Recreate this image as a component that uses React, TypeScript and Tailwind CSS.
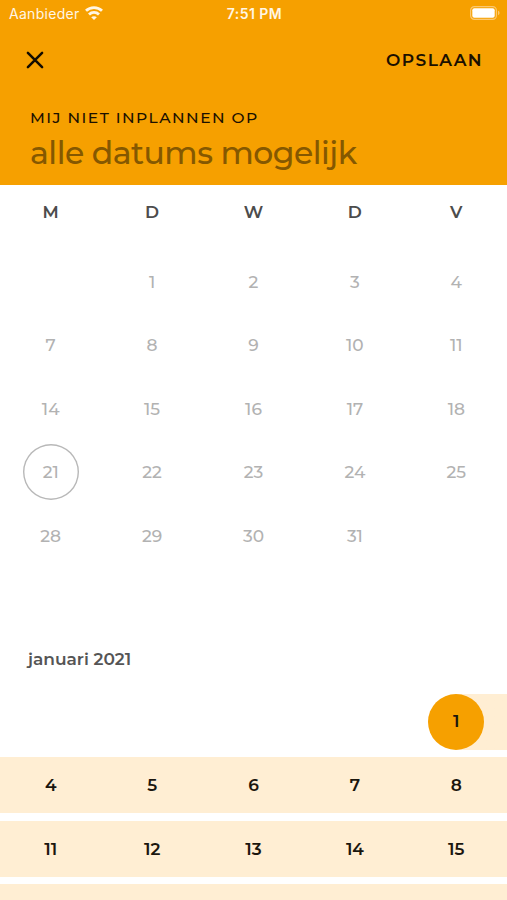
import React from 'react';

type Day = number | null;

const weekdays = ['M', 'D', 'W', 'D', 'V'];

const december: Day[][] = [
  [null, 1, 2, 3, 4],
  [7, 8, 9, 10, 11],
  [14, 15, 16, 17, 18],
  [21, 22, 23, 24, 25],
  [28, 29, 30, 31, null],
];

const january: Day[][] = [
  [4, 5, 6, 7, 8],
  [11, 12, 13, 14, 15],
];

const today = 21;

const StatusBar: React.FC = () => (
  <div className="grid grid-cols-3 items-center h-[27px] pl-[9px] pr-[7px] font-[Inter,sans-serif] text-[#fff6e5]">
    <div className="flex items-center gap-[5px]">
      <span className="text-[14px] tracking-[0.3px] leading-none">Aanbieder</span>
      <svg className="w-[18px] h-[14px] -mt-px" viewBox="0 0 18 14" fill="none" stroke="currentColor" strokeWidth="2.8">
        <path d="M1 4.8C5.4.5 12.6.5 17 4.8" />
        <path d="M4 8.4C6.8 5.7 11.2 5.7 14 8.4" />
        <path d="M9 14 6.2 11.2C7.7 9.8 10.3 9.8 11.8 11.2Z" fill="currentColor" stroke="none" />
      </svg>
    </div>
    <span className="pt-px text-center text-[14px] font-semibold leading-none tracking-[0.45px]">7:51 PM</span>
    <svg className="justify-self-end w-[30px] h-[14px] -mt-px" viewBox="0 0 30 14">
      <rect x="0.6" y="0.6" width="25.8" height="12.8" rx="3.8" fill="none" stroke="#fbc870" strokeWidth="1.2" />
      <rect x="2.3" y="2.3" width="22.4" height="9.4" rx="2" fill="#fff" />
      <path d="M28 4.8C30 5.4 30 8.6 28 9.2Z" fill="#fbc870" />
    </svg>
  </div>
);

const Header: React.FC = () => (
  <header className="h-[185px] bg-[#f6a000]">
    <StatusBar />
    <div className="flex items-center justify-between h-[65px] pl-[26px] pr-[24px]">
      <button aria-label="Sluiten">
        <svg className="w-[18px] h-[18px]" viewBox="0 0 18 18" fill="none" stroke="#140d00" strokeWidth="2.5" strokeLinecap="round">
          <path d="M1.9 1.9 16.1 16.1M16.1 1.9 1.9 16.1" />
        </svg>
      </button>
      <button className="pt-[2px] text-[17px] font-semibold tracking-[1.4px] leading-none text-[#1b1000]">OPSLAAN</button>
    </div>
    <div className="pl-[30px] pt-[16px]">
      <div className="text-[15.5px] font-medium leading-[20px] tracking-[1.45px] text-[#1b1000] whitespace-nowrap">MIJ NIET INPLANNEN OP</div>
      <div className="mt-[5px] text-[31.5px] font-medium leading-[40px] tracking-[-0.5px] text-[#855800] whitespace-nowrap">alle datums mogelijk</div>
    </div>
  </header>
);

const App: React.FC = () => {
  return (
    <div className="w-[507px] h-[900px] overflow-hidden bg-white font-['Montserrat',Inter,sans-serif]">
      <Header />

      {/* Weekdays */}
      <div className="grid grid-cols-5 h-[55px] items-center text-center text-[17px] font-semibold text-[#4c4c4c]">
        {weekdays.map((day, i) => (
          <span key={i}>{day}</span>
        ))}
      </div>

      {/* December */}
      <div className="flex flex-col gap-[7.5px] pt-[13.5px] text-[17px] font-medium text-[#b2b2b2]">
        {december.map((week, i) => (
          <div key={i} className="grid grid-cols-5 h-14">
            {week.map((day, j) => (
              <div key={j} className="flex items-center justify-center">
                <span
                  className={`flex items-center justify-center size-14 pt-[1.6px] rounded-full ${
                    day === today ? 'ring-[1.4px] ring-inset ring-[#b8b8b8]' : ''
                  }`}
                >
                  {day}
                </span>
              </div>
            ))}
          </div>
        ))}
      </div>

      {/* January */}
      <h2 className="mt-[83px] pl-[28px] text-[17px] leading-[24px] font-semibold text-[#555]">januari 2021</h2>
      <div className="flex flex-col gap-[7.5px] mt-[23px] text-[17px] font-semibold text-[#1b160e]">
        <div className="grid grid-cols-5 h-14">
          <div className="col-start-5 flex justify-center bg-linear-to-r from-transparent from-50% to-[#ffeed3] to-50%">
            <span className="flex items-center justify-center size-14 rounded-full bg-[#f6a000]">1</span>
          </div>
        </div>
        {january.map((week, i) => (
          <div key={i} className="grid grid-cols-5 h-14 pt-[1.6px] items-center text-center bg-[#ffeed3]">
            {week.map((day) => (
              <span key={day}>{day}</span>
            ))}
          </div>
        ))}
        <div className="h-14 bg-[#ffeed3]" />
      </div>
    </div>
  );
};

export default App;
